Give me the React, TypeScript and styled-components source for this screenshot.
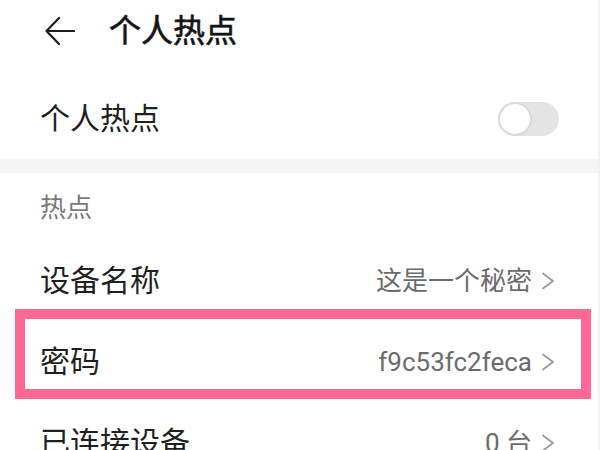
import { FC } from 'react';
import styled, { createGlobalStyle } from 'styled-components';

const GlobalStyle = createGlobalStyle`
  * {
    box-sizing: border-box;
  }

  body {
    margin: 0;
    background: #fff;
    font-family: Roboto, 'Noto Sans CJK SC', sans-serif;
  }
`;

interface SettingRowProps {
  label: string;
  value: string;
}

const SettingRow: FC<SettingRowProps> = ({ label, value }) => (
  <Row>
    <Label>{label}</Label>
    <ValueGroup>
      <Value>{value}</Value>
      <Chevron viewBox='0 0 14 20'>
        <path d='M2 2.5 L12 10 L2 17.5' />
      </Chevron>
    </ValueGroup>
  </Row>
);

const App: FC = () => {
  return (
    <>
      <GlobalStyle />
      <Page>
        <Header>
          <BackIcon viewBox='0 0 30 30'>
            <path d='M2 15 H29 M14 2 L1.5 15 L14 28' />
          </BackIcon>
          <Title>个人热点</Title>
        </Header>

        <Row>
          <Label>个人热点</Label>
          <Switch>
            <Knob />
          </Switch>
        </Row>

        <Divider />

        <SectionTitle>热点</SectionTitle>

        <List>
          <SettingRow label='设备名称' value='这是一个秘密' />
          <SettingRow label='密码' value='f9c53fc2feca' />
          <SettingRow label='已连接设备' value='0 台' />
          <Highlight />
        </List>
      </Page>
    </>
  );
};

const Page = styled.div`
  width: 600px;
  height: 450px;
  overflow: hidden;
  background: #fff;
  border-right: 2px solid #f2f2f2;
`;

const Header = styled.div`
  height: 78px;
  padding: 0 0 16px 45px;
  display: flex;
  align-items: center;
  gap: 34px;
`;

const BackIcon = styled.svg`
  width: 30px;
  height: 30px;
  fill: none;
  stroke: #1c1c1c;
  stroke-width: 2.2;
  stroke-linecap: round;
  stroke-linejoin: round;
`;

const Title = styled.h1`
  margin: 0;
  font-size: 32px;
  font-weight: 400;
  color: #141414;
  line-height: 1;
  -webkit-text-stroke: 0.6px #141414;
`;

const Row = styled.div`
  height: 81px;
  padding: 0 39px 0 40px;
  display: flex;
  align-items: center;
  justify-content: space-between;
`;

const Label = styled.span`
  font-size: 30px;
  color: #1f1f1f;
  line-height: 1;
`;

const Switch = styled.div`
  width: 61px;
  height: 34px;
  border-radius: 17px;
  background: #e4e4e4;
  position: relative;
`;

const Knob = styled.div`
  position: absolute;
  left: 0;
  top: 0;
  width: 34px;
  height: 34px;
  border-radius: 50%;
  background: #fff;
  border: 2px solid #d9d9d9;
`;

const Divider = styled.div`
  height: 14px;
  background: #f5f5f5;
`;

const SectionTitle = styled.div`
  height: 67px;
  padding: 22px 0 0 40px;
  font-size: 26px;
  line-height: 26px;
  color: #7a7a7a;
`;

const List = styled.div`
  position: relative;
`;

const ValueGroup = styled.div`
  display: flex;
  align-items: center;
  gap: 9px;
  padding-right: 4px;
`;

const Value = styled.span`
  font-size: 26px;
  color: #6b6b6b;
  line-height: 1;
`;

const Chevron = styled.svg`
  width: 14px;
  height: 20px;
  fill: none;
  stroke: #9a9a9a;
  stroke-width: 1.8;
  stroke-linecap: round;
  stroke-linejoin: round;
`;

const Highlight = styled.div`
  position: absolute;
  left: 15px;
  top: 69px;
  width: 576px;
  height: 90px;
  border: 10px solid #ff6895;
  pointer-events: none;
`;

export default App;
